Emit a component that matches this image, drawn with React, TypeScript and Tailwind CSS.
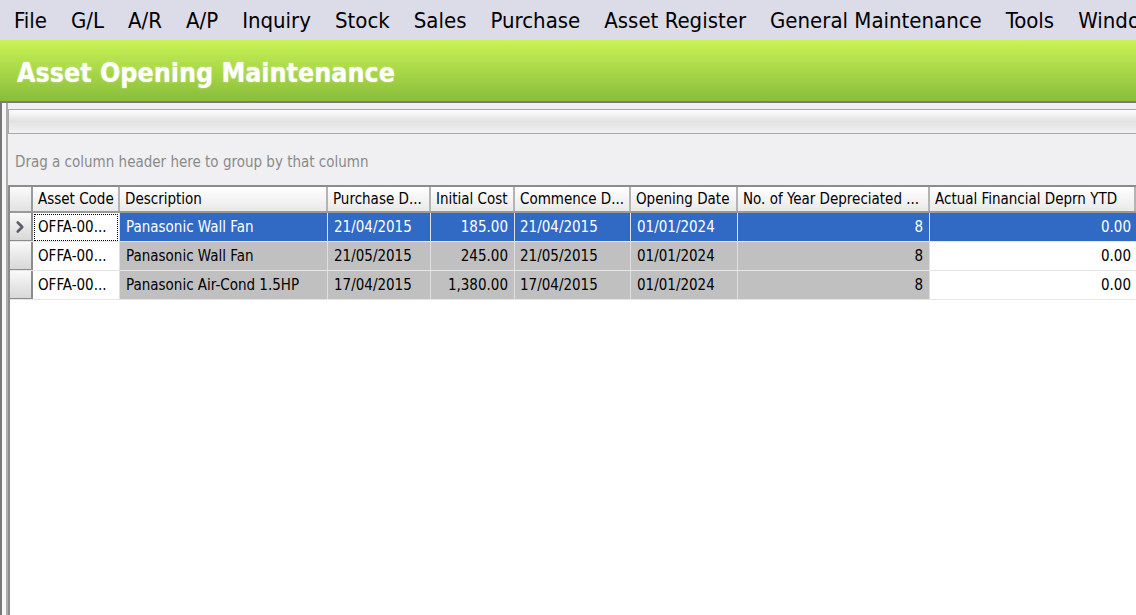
import { ChevronRight } from "lucide-react";

type TAsset = {
  code: string;
  description: string;
  purchaseDate: string;
  initialCost: string;
  commenceDate: string;
  openingDate: string;
  yearsDepreciated: string;
  deprnYtd: string;
};

const menus = [
  "File",
  "G/L",
  "A/R",
  "A/P",
  "Inquiry",
  "Stock",
  "Sales",
  "Purchase",
  "Asset Register",
  "General Maintenance",
  "Tools",
  "Window",
];

const columns = [
  { title: "Asset Code", width: "w-[87px]" },
  { title: "Description", width: "w-[208px]" },
  { title: "Purchase D...", width: "w-[103px]" },
  { title: "Initial Cost", width: "w-[84px]" },
  { title: "Commence D...", width: "w-[116px]" },
  { title: "Opening Date", width: "w-[107px]" },
  { title: "No. of Year Depreciated ...", width: "w-[192px]" },
  { title: "Actual Financial Deprn YTD", width: "flex-1" },
];

const assets: TAsset[] = [
  {
    code: "OFFA-00...",
    description: "Panasonic Wall Fan",
    purchaseDate: "21/04/2015",
    initialCost: "185.00",
    commenceDate: "21/04/2015",
    openingDate: "01/01/2024",
    yearsDepreciated: "8",
    deprnYtd: "0.00",
  },
  {
    code: "OFFA-00...",
    description: "Panasonic Wall Fan",
    purchaseDate: "21/05/2015",
    initialCost: "245.00",
    commenceDate: "21/05/2015",
    openingDate: "01/01/2024",
    yearsDepreciated: "8",
    deprnYtd: "0.00",
  },
  {
    code: "OFFA-00...",
    description: "Panasonic Air-Cond 1.5HP",
    purchaseDate: "17/04/2015",
    initialCost: "1,380.00",
    commenceDate: "17/04/2015",
    openingDate: "01/01/2024",
    yearsDepreciated: "8",
    deprnYtd: "0.00",
  },
];

function AssetRow({ asset, selected }: { asset: TAsset; selected: boolean }) {
  const cell = selected
    ? "bg-[#316ac5] text-white"
    : "bg-[#c0c0c0] text-black";
  const lastCell = selected ? "bg-[#316ac5] text-white" : "bg-white text-black";

  return (
    <div className="flex h-[29px] shrink-0 border-b border-[#e6e6e6] whitespace-nowrap">
      <div className="w-[23px] shrink-0 flex items-center justify-center bg-gradient-to-b from-[#fafafa] to-[#d8d8d8] border-r-2 border-b border-[#8c8c8c]">
        {selected && <ChevronRight size={18} strokeWidth={3.5} className="text-[#5c5c70] -ml-[1px]" />}
      </div>
      <div className="w-[87px] shrink-0 bg-white text-black flex items-center px-[1px] border-r border-[#e0e0e0]">
        <span
          className={`flex items-center h-[27px] w-full px-[4px] ${
            selected ? "outline-1 outline-dotted outline-black -outline-offset-1" : ""
          }`}
        >
          {asset.code}
        </span>
      </div>
      <div className={`w-[208px] shrink-0 flex items-center px-[6px] border-r border-[#e0e0e0] ${cell}`}>
        {asset.description}
      </div>
      <div className={`w-[103px] shrink-0 flex items-center px-[6px] border-r border-[#e0e0e0] ${cell}`}>
        {asset.purchaseDate}
      </div>
      <div className={`w-[84px] shrink-0 flex items-center justify-end pr-[6px] border-r border-[#e0e0e0] ${cell}`}>
        {asset.initialCost}
      </div>
      <div className={`w-[116px] shrink-0 flex items-center px-[5px] border-r border-[#e0e0e0] ${cell}`}>
        {asset.commenceDate}
      </div>
      <div className={`w-[107px] shrink-0 flex items-center px-[6px] border-r border-[#e0e0e0] ${cell}`}>
        {asset.openingDate}
      </div>
      <div className={`w-[192px] shrink-0 flex items-center justify-end pr-[6px] border-r border-[#e0e0e0] ${cell}`}>
        {asset.yearsDepreciated}
      </div>
      <div className={`flex-1 flex items-center justify-end pr-[5px] ${lastCell}`}>
        {asset.deprnYtd}
      </div>
    </div>
  );
}

export default function App() {
  return (
    <div
      className="w-[1136px] h-[615px] overflow-hidden flex flex-col bg-[#f0f0f2]"
      style={{ fontFamily: '"DejaVu Sans Condensed", "DejaVu Sans", sans-serif' }}
    >
      {/* menu bar */}
      <div className="h-[40px] shrink-0 bg-[#dcdbe8] flex items-center pl-[14px] gap-[24px] text-[22px] text-black whitespace-nowrap overflow-hidden">
        {menus.map((m) => (
          <span key={m} className="shrink-0">
            {m}
          </span>
        ))}
      </div>

      {/* form title */}
      <div className="h-[63px] shrink-0 bg-gradient-to-b from-[#c9f355] to-[#89bd3b] border-b-2 border-[#7c7c7c] flex items-center pl-[17px] pt-[4px]">
        <h1 className="text-[26.6px] font-bold text-white whitespace-nowrap [text-shadow:0_0_2px_rgba(255,255,255,0.6)]">
          Asset Opening Maintenance
        </h1>
      </div>

      <div className="flex-1 min-h-0 flex border-l-2 border-[#777]">
        <div className="w-[4px] shrink-0 bg-[#f6f6f6]" />
        <div className="w-[2px] shrink-0 bg-[#acacac]" />
        <div className="flex-1 min-w-0 flex flex-col pt-[6px]">
          {/* toolbar strip */}
          <div className="h-[25px] shrink-0 border border-[#a9a9a9] border-r-0 bg-gradient-to-b from-[#fdfdfd] via-[#e2e2e2] to-[#f2f2f2]" />

          {/* group panel */}
          <div className="h-[51px] shrink-0 flex items-center pl-[7px] pt-[6px] text-[15px] text-[#8a8a8a] whitespace-nowrap">
            Drag a column header here to group by that column
          </div>

          {/* grid */}
          <div className="flex-1 flex flex-col bg-white border-l-2 border-t-2 border-[#8c8c8c] text-[15px]">
            <div className="flex h-[26px] shrink-0 border-b-2 border-[#9a9a9a] bg-gradient-to-b from-white to-[#e9e9e9] whitespace-nowrap">
              <div className="w-[23px] shrink-0 border-r-2 border-[#9a9a9a] bg-gradient-to-b from-[#fbfbfb] to-[#e2e2e2]" />
              {columns.map((c) => (
                <div
                  key={c.title}
                  className={`${c.width} shrink-0 flex items-center px-[5px] border-r-2 border-[#b4b4b4] overflow-hidden text-black`}
                >
                  {c.title}
                </div>
              ))}
            </div>
            {assets.map((a, i) => (
              <AssetRow key={i} asset={a} selected={i === 0} />
            ))}
          </div>
        </div>
      </div>
    </div>
  );
}
